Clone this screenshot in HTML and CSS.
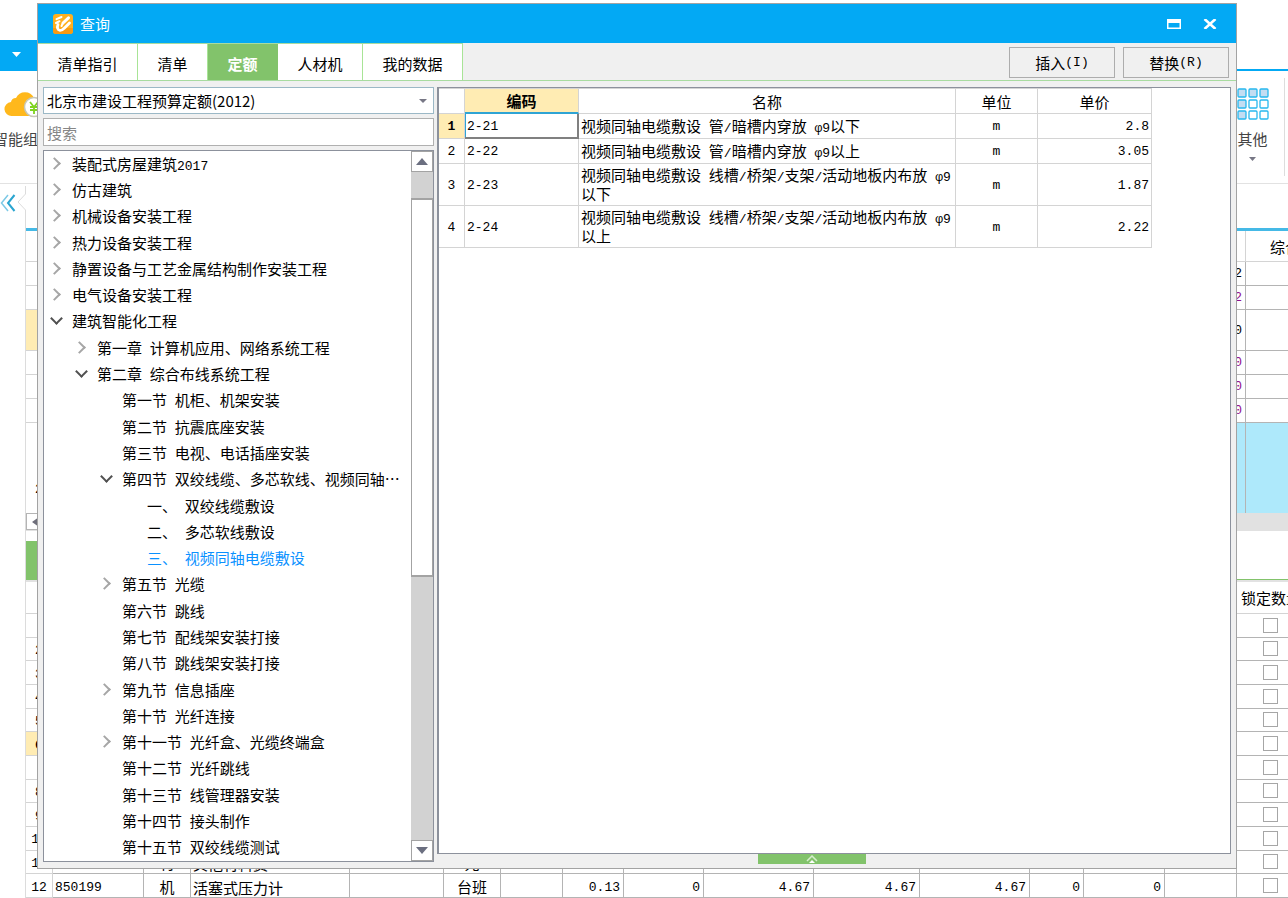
FILE: index.html
```html
<!DOCTYPE html>
<html lang="zh-CN">
<head>
<meta charset="utf-8">
<title>查询</title>
<link rel="stylesheet" href="styles.css">
</head>
<body>
<div class="app">
  <header class="app-top"><button class="app-menu" aria-label="菜单"><svg width="9" height="5" viewBox="0 0 9 5"><path d="M0 0h9L4.500 5z" fill="#fff"/></svg></button></header>
  <div class="ribbon">
    <button class="tool">
      <svg width="46" height="32" viewBox="0 0 46 32"><path d="M12 28a7 7 0 0 1-1-14 5 5 0 0 1 5-4A10 10 0 0 1 34 10a9 9 0 0 1 4 18z" fill="#ffb81c"/><circle cx="34" cy="19" r="9.500" fill="#fff" stroke="#c8c8b8" stroke-width="1.500"/><path d="M30 14l4 5 4-5M34 19v7M30 19h8M30 22h8" stroke="#7ed321" stroke-width="1.800" fill="none"/></svg>
      <span>智能组价</span>
    </button>
    <button class="tool tool-other">
      <svg width="32" height="32" viewBox="0 0 32 32" stroke="#27b8ee" stroke-width="1.300" fill="#fff"><g fill="#c3ddf2"><rect x="1" y="1" width="8" height="8" rx="1"/><rect x="12" y="1" width="8" height="8" rx="1"/><rect x="23" y="1" width="8" height="8" rx="1"/><rect x="1" y="12" width="8" height="8" rx="1"/><rect x="1" y="23" width="8" height="8" rx="1"/></g><rect x="12" y="12" width="8" height="8" rx="1"/><rect x="23" y="12" width="8" height="8" rx="1"/><rect x="12" y="23" width="8" height="8" rx="1"/><rect x="23" y="23" width="8" height="8" rx="1"/></svg>
      <span>其他</span>
      <svg width="7" height="4" viewBox="0 0 7 4"><path d="M0 0h7L3.500 4z" fill="#777785"/></svg>
    </button>
  </div>
  <div class="work">
    <aside class="side"><button aria-label="收起"><svg width="26" height="46" viewBox="0 0 26 46" fill="none"><path d="M8 11L1.500 19 8 27" stroke="#7cc9e6" stroke-width="1.500"/><path d="M14.500 11L8 19l6.500 8" stroke="#2aa5d0" stroke-width="2"/><path d="M25.500 2v8L18 18l7.500 8v20" stroke="#dcdcdc"/></svg></button></aside>
    <main class="sheets">
      <table class="upper">
        <colgroup><col class="u-no"><col class="u-mid"><col class="u-end"></colgroup>
        <tr><th></th><th></th><th>综合单价</th></tr>
        <tr><td></td><td>2</td><td></td></tr>
        <tr><td></td><td class="purple">2</td><td></td></tr>
        <tr class="tall"><td class="on"></td><td>0</td><td></td></tr>
        <tr><td></td><td class="purple">0</td><td></td></tr>
        <tr><td></td><td class="purple">0</td><td></td></tr>
        <tr><td></td><td class="purple">0</td><td></td></tr>
        <tr class="current"><td>2</td><td></td><td></td></tr>
      </table>
      <div class="hscroll"><button aria-label="向左滚动"><svg width="7" height="10" viewBox="0 0 7 10"><path d="M7 0v10L0 5z" fill="#6e6e7a"/></svg></button></div>
      <div class="lower-tabs"><span class="lower-tab"></span></div>
      <div class="lower-wrap">
      <table class="lower">
        <colgroup><col class="w27"><col class="w91"><col class="w47"><col class="w159"><col class="w94"><col class="w57"><col class="w62"><col class="w61"><col class="w80"><col class="w110"><col class="w106"><col class="w110"><col class="w54"><col class="w81"><col class="w72"><col class="w68"></colgroup>
        <tr><th></th><th colspan="14"></th><th>锁定数量</th></tr>
        <tr><td></td><td colspan="14"></td><td><input type="checkbox" aria-label="锁定数量"></td></tr>
        <tr><td>2</td><td colspan="14"></td><td><input type="checkbox" aria-label="锁定数量"></td></tr>
        <tr><td>3</td><td colspan="14"></td><td><input type="checkbox" aria-label="锁定数量"></td></tr>
        <tr><td>4</td><td colspan="14"></td><td><input type="checkbox" aria-label="锁定数量"></td></tr>
        <tr><td>5</td><td colspan="14"></td><td><input type="checkbox" aria-label="锁定数量"></td></tr>
        <tr><td class="on">6</td><td colspan="14"></td><td><input type="checkbox" aria-label="锁定数量"></td></tr>
        <tr><td></td><td colspan="14"></td><td><input type="checkbox" aria-label="锁定数量"></td></tr>
        <tr><td>8</td><td colspan="14"></td><td><input type="checkbox" aria-label="锁定数量"></td></tr>
        <tr><td>9</td><td colspan="14"></td><td><input type="checkbox" aria-label="锁定数量"></td></tr>
        <tr><td>10</td><td colspan="14"></td><td><input type="checkbox" aria-label="锁定数量"></td></tr>
        <tr><td>11</td><td></td><td class="cjk">材</td><td class="cjk name">其他材料费</td><td></td><td class="cjk">元</td><td></td><td></td><td></td><td></td><td></td><td></td><td></td><td></td><td><input type="checkbox" aria-label="是否暂估"></td><td><input type="checkbox" aria-label="锁定数量"></td></tr>
        <tr><td>12</td><td class="name">850199</td><td class="cjk">机</td><td class="cjk name">活塞式压力计</td><td></td><td class="cjk">台班</td><td></td><td class="num">0.13</td><td class="num">0</td><td class="num">4.67</td><td class="num">4.67</td><td class="num">4.67</td><td class="num">0</td><td class="num">0</td><td></td><td><input type="checkbox" aria-label="锁定数量"></td></tr>
      </table>
      </div>
    </main>
  </div>
</div>

<section class="dialog" role="dialog" aria-labelledby="dlg-title">
  <header class="titlebar">
    <svg width="20" height="20" viewBox="0 0 20 20"><rect width="20" height="20" rx="3" fill="#ffb01f"/><path d="M0 14h20v3a3 3 0 0 1-3 3H3a3 3 0 0 1-3-3z" fill="#f99a12"/><g fill="none" stroke="#fff" stroke-linecap="round" stroke-linejoin="round"><path d="M3.500 5.200L8.500 3M3 9L6.500 7.200" stroke-width="2"/><path d="M10 9L15.500 3.800" stroke-width="3"/><path d="M5 10.500C3.800 13.500 4.500 16 7 16.300 9 16.500 10 15.500 11.500 14L16.500 9" stroke-width="2.800"/><path d="M10 9l-1.500 3" stroke-width="2"/></g></svg>
    <h1 id="dlg-title">查询</h1>
    <button aria-label="最大化"><svg width="14" height="10" viewBox="0 0 14 10"><path d="M0 0h14v10H0zM1.500 4v4.500h11V4z" fill="#fff" fill-rule="evenodd"/></svg></button>
    <button aria-label="关闭"><svg width="14" height="10" viewBox="0 0 14 10"><path d="M1.500 0l11 10M12.500 0l-11 10" stroke="#fff" stroke-width="2.600"/></svg></button>
  </header>
  <div class="toolbar">
    <nav class="tabs"><button class="t-guide">清单指引</button><button class="t-list">清单</button><button class="t-list active">定额</button><button class="t-res">人材机</button><button class="t-guide">我的数据</button></nav>
    <div class="actions"><button>插入<span class="m">(I)</span></button><button>替换<span class="m">(R)</span></button></div>
  </div>
  <div class="content">
    <div class="left">
      <div class="pick"><select aria-label="定额库"><option>北京市建设工程预算定额(2012)</option></select></div>
      <input class="search" type="text" placeholder="搜索" aria-label="搜索">
      <div class="treebox">
        <ul class="tree">
          <li><button class="shut" aria-label="展开"></button><span>装配式房屋建筑<span class="m">2017</span></span></li>
          <li><button class="shut" aria-label="展开"></button><span>仿古建筑</span></li>
          <li><button class="shut" aria-label="展开"></button><span>机械设备安装工程</span></li>
          <li><button class="shut" aria-label="展开"></button><span>热力设备安装工程</span></li>
          <li><button class="shut" aria-label="展开"></button><span>静置设备与工艺金属结构制作安装工程</span></li>
          <li><button class="shut" aria-label="展开"></button><span>电气设备安装工程</span></li>
          <li><button class="open" aria-label="收起"></button><span>建筑智能化工程</span></li>
          <li class="l1"><button class="shut" aria-label="展开"></button><span>第一章<span class="m"> </span>计算机应用、网络系统工程</span></li>
          <li class="l1"><button class="open" aria-label="收起"></button><span>第二章<span class="m"> </span>综合布线系统工程</span></li>
          <li class="l2 leaf"><span>第一节<span class="m"> </span>机柜、机架安装</span></li>
          <li class="l2 leaf"><span>第二节<span class="m"> </span>抗震底座安装</span></li>
          <li class="l2 leaf"><span>第三节<span class="m"> </span>电视、电话插座安装</span></li>
          <li class="l2"><button class="open" aria-label="收起"></button><span>第四节<span class="m"> </span>双绞线缆、多芯软线、视频同轴…</span></li>
          <li class="l3 leaf"><span>一、<span class="m"> </span>双绞线缆敷设</span></li>
          <li class="l3 leaf"><span>二、<span class="m"> </span>多芯软线敷设</span></li>
          <li class="l3 leaf chosen"><span>三、<span class="m"> </span>视频同轴电缆敷设</span></li>
          <li class="l2"><button class="shut" aria-label="展开"></button><span>第五节<span class="m"> </span>光缆</span></li>
          <li class="l2 leaf"><span>第六节<span class="m"> </span>跳线</span></li>
          <li class="l2 leaf"><span>第七节<span class="m"> </span>配线架安装打接</span></li>
          <li class="l2 leaf"><span>第八节<span class="m"> </span>跳线架安装打接</span></li>
          <li class="l2"><button class="shut" aria-label="展开"></button><span>第九节<span class="m"> </span>信息插座</span></li>
          <li class="l2 leaf"><span>第十节<span class="m"> </span>光纤连接</span></li>
          <li class="l2"><button class="shut" aria-label="展开"></button><span>第十一节<span class="m"> </span>光纤盒、光缆终端盒</span></li>
          <li class="l2 leaf"><span>第十二节<span class="m"> </span>光纤跳线</span></li>
          <li class="l2 leaf"><span>第十三节<span class="m"> </span>线管理器安装</span></li>
          <li class="l2 leaf"><span>第十四节<span class="m"> </span>接头制作</span></li>
          <li class="l2 leaf"><span>第十五节<span class="m"> </span>双绞线缆测试</span></li>
        </ul>
        <div class="vscroll">
          <button aria-label="向上滚动"><svg width="12" height="7" viewBox="0 0 12 7"><path d="M6 0l6 7H0z" fill="#6b6f80"/></svg></button>
          <div class="track"><div class="thumb"></div></div>
          <button aria-label="向下滚动"><svg width="12" height="7" viewBox="0 0 12 7"><path d="M0 0h12L6 7z" fill="#6b6f80"/></svg></button>
        </div>
      </div>
    </div>
    <div class="right">
      <div class="gridbox">
        <table class="grid">
          <colgroup><col class="c-no"><col class="c-code"><col class="c-name"><col class="c-unit"><col class="c-price"></colgroup>
          <thead><tr><th></th><th class="on">编码</th><th>名称</th><th>单位</th><th>单价</th></tr></thead>
          <tbody>
            <tr><td class="idx on">1</td><td class="code picked">2-21</td><td>视频同轴电缆敷设<span class="m"> </span>管<span class="m">/</span>暗槽内穿放<span class="m"> φ9</span>以下</td><td class="unit">m</td><td class="price">2.8</td></tr>
            <tr><td class="idx">2</td><td class="code">2-22</td><td>视频同轴电缆敷设<span class="m"> </span>管<span class="m">/</span>暗槽内穿放<span class="m"> φ9</span>以上</td><td class="unit">m</td><td class="price">3.05</td></tr>
            <tr><td class="idx">3</td><td class="code">2-23</td><td>视频同轴电缆敷设<span class="m"> </span>线槽<span class="m">/</span>桥架<span class="m">/</span>支架<span class="m">/</span>活动地板内布放<span class="m"> φ9</span>以下</td><td class="unit">m</td><td class="price">1.87</td></tr>
            <tr><td class="idx">4</td><td class="code">2-24</td><td>视频同轴电缆敷设<span class="m"> </span>线槽<span class="m">/</span>桥架<span class="m">/</span>支架<span class="m">/</span>活动地板内布放<span class="m"> φ9</span>以上</td><td class="unit">m</td><td class="price">2.22</td></tr>
          </tbody>
        </table>
      </div>
      <button class="handle" aria-label="展开"><svg width="12" height="8" viewBox="0 0 12 8" fill="none"><path d="M1 6l5-5 5 5" stroke="#d6edcd" stroke-width="1.500"/><path d="M3 8l3-3 3 3z" fill="#fff"/></svg></button>
    </div>
  </div>
</section>
</body>
</html>
```
FILE: styles.css
```css
* { box-sizing: border-box; }
html, body { height: 100%; }
body {
  margin: 0;
  overflow: hidden;
  position: relative;
  background: #fff;
  color: #000;
  font: 15px/19px "Noto Sans CJK SC", sans-serif;
}
button, input, select { font: inherit; color: inherit; margin: 0; }
button { padding: 0; border: 0; background: none; display: flex; align-items: center; justify-content: center; }
table { border-spacing: 0; table-layout: fixed; }
th, td { padding: 0; font-weight: 400; }
svg { display: block; flex: none; }
.m { font-family: "Liberation Mono", monospace; font-size: 13px; line-height: 0; }

/* application behind the dialog */
.app { height: 100%; display: flex; flex-direction: column; overflow: hidden; }
.app-top { height: 71px; flex: none; display: flex; align-items: flex-end; border-bottom: 2px solid #03a9f4; }
.app-menu { width: 100px; height: 29px; background: #03a9f4; justify-content: flex-start; padding-left: 12px; }
.ribbon { height: 113px; flex: none; display: flex; justify-content: space-between; padding: 7px 3px 7px 0; border-bottom: 1px solid #e2e2e2; color: #444; }
.tool { width: 46px; flex-direction: column; justify-content: flex-start; padding-top: 10px; gap: 9px; white-space: nowrap; }
.tool-other { width: 64px; border-right: 1px solid #ddd; }
.work { flex: 1; min-height: 0; display: flex; }
.side { width: 26px; flex: none; border-right: 1px solid #dcdcdc; }
.side button { width: 26px; height: 46px; background: #fff; }
.sheets { flex: 1; min-width: 0; padding-top: 44px; display: flex; flex-direction: column; overflow: hidden; }

.upper { width: 1350px; flex: none; border-top: 3px solid #45b9e6; font: 13px/19px "Liberation Mono", monospace; }
.u-no { width: 27px; }
.u-mid { width: 1193px; }
.upper th { height: 31px; border-right: 1px solid #d4d4d4; border-bottom: 1px solid #d4d4d4; font: 15px/19px "Noto Sans CJK SC", sans-serif; text-align: left; padding-left: 24px; }
.upper td { height: 24px; border-right: 1px solid #b4b4b4; border-bottom: 1px solid #b4b4b4; text-align: right; padding-right: 3px; }
.upper td:first-child { border-color: #d4d4d4; text-align: center; padding: 0; }
.upper .tall td { height: 41px; }
.upper .current td { height: 90px; background: #aee9fb; border-bottom: 0; }
.upper .current td:first-child { background: #fff; padding-top: 42px; }
.purple { color: #90108f; }
.on { background: #ffecb3; font-weight: 700; }

.hscroll { height: 18px; flex: none; background: #e1e1e1; }
.hscroll button { width: 18px; height: 17px; border: 1px solid #b4b4b4; background: #fff; }
.lower-tabs { height: 51px; flex: none; padding-top: 10px; border-bottom: 2px solid #e2e2e2; }
.lower-tab { display: block; height: 39px; width: 100%; border-left: 12px solid #82c36b; border-bottom: 1px solid #82c36b; }
.lower-wrap { flex: 1; min-height: 0; }
.lower { width: 1279px; height: 100%; font: 13px/16px "Liberation Mono", monospace; }
.lower th { height: 31px; font: 15px/19px "Noto Sans CJK SC", sans-serif; border-bottom: 1px solid #d4d4d4; }
.lower td { height: 23px; border-right: 1px solid #b4b4b4; border-bottom: 1px solid #b4b4b4; text-align: center; }
.lower td:first-child { border-color: #d4d4d4; padding-top: 4px; }
.lower .cjk { font: 15px/16px "Noto Sans CJK SC", sans-serif; padding-top: 3px; }
.lower .name { text-align: left; padding: 4px 0 0 2px; }
.lower .num { text-align: right; padding: 4px 3px 0 0; }
.lower input { appearance: none; display: block; width: 15px; height: 15px; margin: 0 auto; border: 1px solid #a6a6a6; background: #fff; }
.w27 { width: 27px; }
.w91 { width: 91px; }
.w47 { width: 47px; }
.w159 { width: 159px; }
.w94 { width: 94px; }
.w57 { width: 57px; }
.w62 { width: 62px; }
.w61 { width: 61px; }
.w80 { width: 80px; }
.w110 { width: 110px; }
.w106 { width: 106px; }
.w54 { width: 54px; }
.w81 { width: 81px; }
.w72 { width: 72px; }
.w68 { width: 68px; }

/* dialog window */
.dialog { position: absolute; inset: 3px 51px 29px 37px; display: flex; flex-direction: column; background: #f0f0f0; border: 1px solid #a3a3a3; }
.titlebar { height: 39px; flex: none; display: flex; align-items: center; padding: 0 8px 0 15px; background: #03a9f4; color: #fff; }
.titlebar h1 { flex: 1; margin: 0 0 0 7px; font-size: 15px; font-weight: 400; }
.titlebar button { width: 36px; height: 32px; }
.toolbar { height: 38px; flex: none; display: flex; justify-content: space-between; border-bottom: 1px solid #a8dba0; }
.tabs { display: flex; border-top: 1px solid #a8dba0; }
.tabs button { background: #fff; border-right: 1px solid #a8e496; padding-top: 3px; }
.tabs .t-guide { width: 100px; }
.tabs .t-list { width: 70px; }
.tabs .t-res { width: 85px; }
.tabs .active { background: #82c36b; border-color: #82c36b; color: #fff; font-weight: 700; }
.actions { display: flex; gap: 8px; padding: 4px 7px 2px 0; }
.actions button { width: 106px; border: 1px solid #adadad; }
.content { flex: 1; min-height: 0; display: flex; gap: 3px; padding: 6px 5px 0; }
.left { width: 391px; flex: none; display: flex; flex-direction: column; gap: 4px; padding-bottom: 6px; }
.pick { position: relative; }
.pick::after { content: ""; position: absolute; right: 7px; top: 12px; border: 4px solid transparent; border-top-color: #777785; border-bottom: 0; }
.pick select { appearance: none; display: block; width: 100%; height: 27px; padding: 0 3px; border: 1px solid #9bb8c6; border-radius: 0; background: #fff; }
.search { width: 100%; height: 28px; padding: 0 3px; border: 1px solid #b0b0b0; background: #fff; }
.search::placeholder { color: #868686; opacity: 1; }
.treebox { flex: 1; min-height: 0; display: flex; border: 1px solid #8c919c; background: #fff; }
.tree { flex: 1; min-width: 0; margin: 0; padding: 0; list-style: none; display: flex; flex-direction: column; overflow: hidden; }
.tree li { flex: 1; min-height: 0; display: flex; align-items: center; white-space: nowrap; }
.tree li > span { padding: 0 0 2px 2px; }
.tree button { width: 26px; height: 20px; }
.tree button::before { content: ""; width: 7px; height: 7px; border: solid #a6a6a6; border-width: 2px 2px 0 0; rotate: 45deg; }
.tree .shut { padding: 0 6px 2px 0; }
.tree .open { padding: 0 2px 6px 0; }
.tree .open::before { border-color: #505050; rotate: 135deg; }
.tree .l1 { padding-left: 25px; }
.tree .l2 { padding-left: 50px; }
.tree .l3 { padding-left: 75px; }
.tree .leaf > span { padding-left: 28px; }
.tree .chosen { color: #0a91ff; }
.vscroll { width: 22px; flex: none; display: flex; flex-direction: column; background: #d2d2d2; }
.vscroll button { height: 21px; flex: none; border: 1px solid #a3a3a3; background: #fff; }
.track { flex: 1; min-height: 0; padding-top: 26px; }
.thumb { height: 59%; border: 1px solid #a3a3a3; border-width: 2px 1px; background: #fff; }
.right { flex: 1; min-width: 0; display: flex; flex-direction: column; align-items: center; padding-bottom: 4px; }
.gridbox { width: 100%; flex: 1; min-height: 0; overflow: hidden; border: 1px solid #8c919c; border-left-width: 2px; background: #fff; }
.handle { width: 108px; height: 10px; margin-right: 44px; flex: none; background: #82c36b; }

.grid { width: 713px; border-top: 1px solid #d4d4d4; }
.c-no { width: 26px; }
.c-code { width: 114px; }
.c-name { width: 377px; }
.c-unit { width: 82px; }
.c-price { width: 114px; }
.grid th { height: 25px; border: solid #d4d4d4; border-width: 0 1px 1px 0; }
.grid th.on { font-weight: 700; border-bottom: 2px solid #2fa4d4; }
.grid td { height: 25px; padding: 1px 2px 2px; border: solid #d4d4d4; border-width: 0 1px 1px 0; }
.grid .idx, .grid .code, .grid .unit, .grid .price { padding-top: 1px; padding-bottom: 0; font-family: "Liberation Mono", monospace; font-size: 13px; }
.grid .idx, .grid .unit { text-align: center; }
.grid .price { text-align: right; }
.grid .picked { border-right: 2px solid #808080; border-bottom: 2px solid #808080; box-shadow: inset 1px 0 #2fa4d4; }
```
